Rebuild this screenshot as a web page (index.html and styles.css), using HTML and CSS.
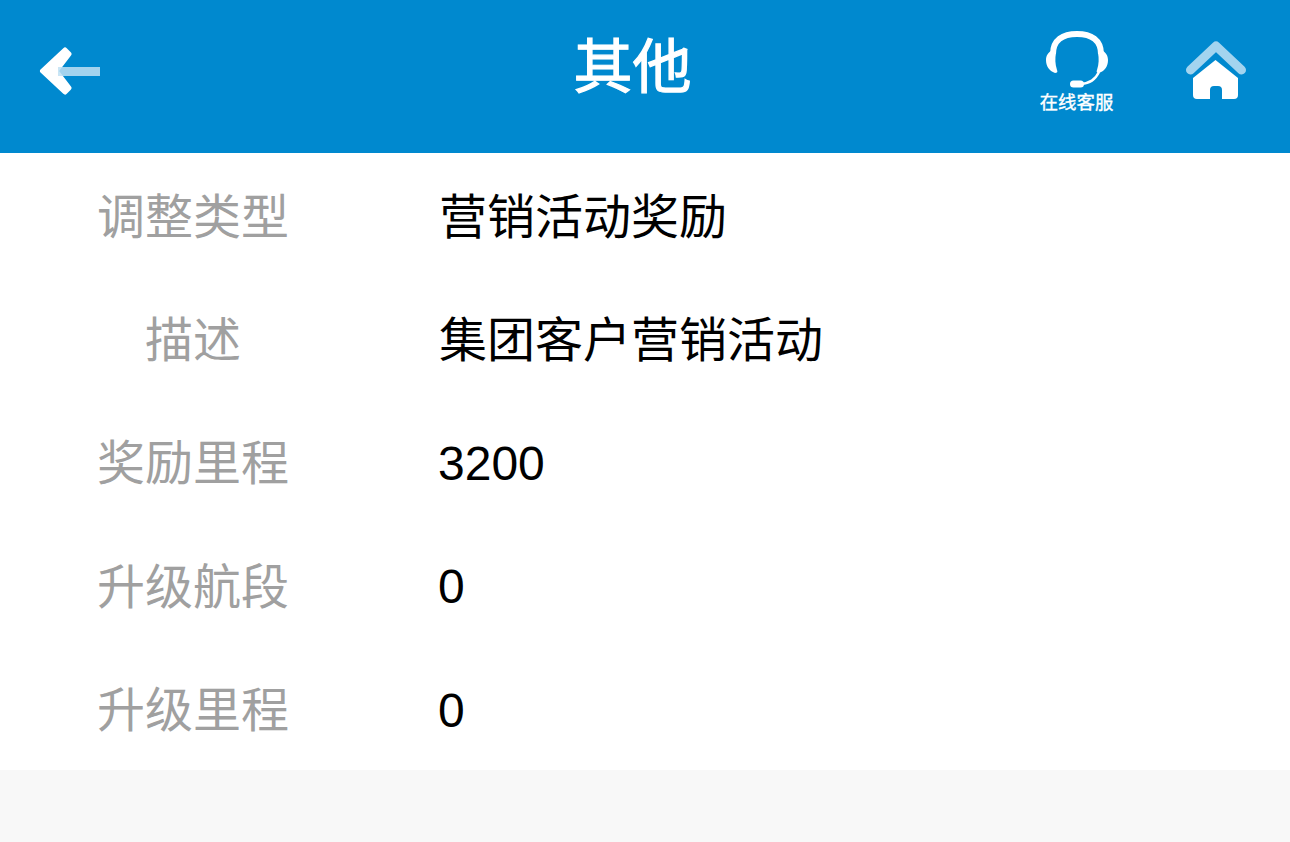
FILE: index.html
```html
<!DOCTYPE html>
<html lang="zh-CN">
<head>
    <meta charset="UTF-8">
    <title>其他</title>
    <link rel="stylesheet" href="styles.css">
</head>
<body>
    <header class="topbar">
        <a class="back">
            <svg class="back-icon" width="62" height="52" viewBox="0 0 62 52">
                <path d="M3.500 26 L26 5 L30 9 L17 26 L30 43 L26 47 Z" fill="#fff" stroke="#fff" stroke-width="5" stroke-linejoin="round"/>
                <rect x="19" y="22" width="42" height="9" fill="#bfe0f3" opacity="0.85"/>
            </svg>
        </a>
        <h1 class="title">其他</h1>
        <div class="actions">
            <a class="service">
                <svg width="64" height="60" viewBox="0 0 64 60">
                    <path d="M8 24 C8 10 18 4 32 4 C46 4 56 10 56 24" fill="none" stroke="#fff" stroke-width="6"/>
                    <path d="M8 20 C3 22 1 26 1 30 C1 36 4 41 10 43 C12 43 13 42 12 40 C10 34 10 28 11 23 C11 20 10 20 8 20 Z" fill="#fff"/>
                    <path d="M56 20 C61 22 63 26 63 30 C63 36 60 41 54 43 C52 43 51 42 52 40 C54 34 54 28 53 23 C53 20 54 20 56 20 Z" fill="#fff"/>
                    <path d="M54 42 C50 50 45 53 36 54" fill="none" stroke="#fff" stroke-width="2.500"/>
                    <rect x="25" y="50.500" width="14" height="7" rx="3.500" fill="#fff"/>
                </svg>
                <span class="service-label">在线客服</span>
            </a>
            <a class="home">
                <svg width="62" height="61" viewBox="0 0 62 61">
                    <path d="M5.500 31 L31 7 L56.500 31" fill="none" stroke="#a3d4ef" stroke-width="9" stroke-linecap="round" stroke-linejoin="round"/>
                    <path d="M30.500 21 L53 39 V56 Q53 60 49 60 H37 V51 Q37 47 33 47 H29 Q25 47 25 51 V60 H12 Q8 60 8 56 V39 Z" fill="#fff"/>
                </svg>
            </a>
        </div>
    </header>

    <main class="detail">
        <div class="row">
            <div class="label">调整类型</div>
            <div class="value">营销活动奖励</div>
        </div>
        <div class="row">
            <div class="label">描述</div>
            <div class="value">集团客户营销活动</div>
        </div>
        <div class="row">
            <div class="label">奖励里程</div>
            <div class="value value-num">3200</div>
        </div>
        <div class="row">
            <div class="label">升级航段</div>
            <div class="value value-num">0</div>
        </div>
        <div class="row">
            <div class="label">升级里程</div>
            <div class="value value-num">0</div>
        </div>
    </main>
</body>
</html>
```

FILE: styles.css
```css
html, body {
    height: 100%;
}

body {
    margin: 0;
    background: #f8f8f8;
    font-family: "Liberation Sans", "Noto Sans CJK SC", sans-serif;
}

.topbar {
    display: flex;
    align-items: center;
    justify-content: space-between;
    height: 153px;
    padding: 0 43px 0 39px;
    background: #0089cf;
    color: #fff;
    position: relative;
}

.back {
    display: flex;
    margin-top: -12px;
}

.title {
    position: absolute;
    left: 0;
    right: 25px;
    top: 37px;
    margin: 0;
    font-size: 59px;
    line-height: 62px;
    font-weight: 400;
    -webkit-text-stroke: 1.200px #fff;
    text-align: center;
    pointer-events: none;
}

.actions {
    display: flex;
    align-items: flex-start;
    gap: 71px;
    margin-top: -10px;
}

.service {
    display: flex;
    flex-direction: column;
    align-items: center;
    width: 74px;
}

.service-label {
    margin-top: 3px;
    margin-right: 1px;
    font-size: 18.400px;
    line-height: 20px;
    -webkit-text-stroke: 0.400px #fff;
    white-space: nowrap;
}

.home {
    display: flex;
    margin-top: 9px;
}

.detail {
    background: #fff;
    height: 617px;
    padding-top: 1px;
    box-sizing: border-box;
}

.row {
    display: flex;
    align-items: center;
    height: 123.400px;
    font-size: 48px;
}

.label {
    width: 192px;
    margin-left: 97px;
    margin-bottom: 6px;
    color: #a0a0a0;
    text-align: center;
}

.value {
    margin-left: 150px;
    margin-bottom: 6px;
    color: #000;
}

.value-num {
    margin-left: 149px;
    margin-top: 2px;
    margin-bottom: 0;
}
```
